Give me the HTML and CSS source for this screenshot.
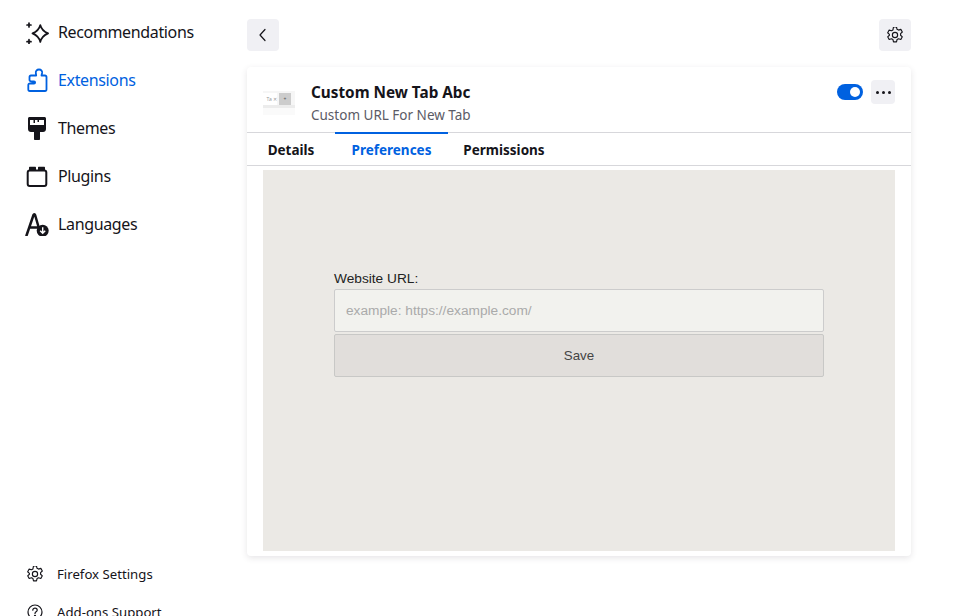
FILE: index.html
```html
<!DOCTYPE html>
<html lang="en">
<head>
  <meta charset="UTF-8">
  <title>Add-ons Manager</title>
  <link rel="stylesheet" href="styles.css">
</head>
<body>

<nav class="sidebar">
  <ul class="cats">
    <li class="cat">
      <svg class="cat-icon" viewBox="0 0 24 24" fill="none" stroke="currentColor" stroke-width="1.700" stroke-linejoin="round" stroke-linecap="round">
        <path d="M15.300 5c.9 3.700 2.400 6.200 7.800 8.400-5.400 2.200-6.900 4.700-7.800 8.600-.9-3.900-2.400-6.400-7.800-8.600 5.400-2.200 6.900-4.700 7.800-8.400z"/>
        <path d="M4 3v4M2 5h4M4 19.700v4M2 21.700h4"/>
      </svg>
      <span>Recommendations</span>
    </li>
    <li class="cat active">
      <svg class="cat-icon" viewBox="0 0 24 24" fill="none" stroke="currentColor" stroke-width="1.800" stroke-linejoin="round">
        <path d="M14 1.500c-2.200 0-3.500 1.600-3.200 3.500l.4 2.500H6c-1 0-1.500.7-1.500 1.500v3c0 1.200 1.500 1.500 3 1.500H9c1.500 0 1.500 2 0 2H5c-1 0-1.700.7-1.700 1.700v4c0 .9.700 1.800 1.500 1.800H20c.9 0 1.500-.7 1.500-1.800V9c0-.9-.6-1.500-1.500-1.500h-3.500l.6-2.500c.4-1.900-.9-3.500-3.100-3.500z"/>
      </svg>
      <span>Extensions</span>
    </li>
    <li class="cat">
      <svg class="cat-icon" viewBox="0 0 24 24" fill="currentColor">
        <path d="M4.500 1h15c.8 0 1.500.7 1.500 1.500V13c0 1.700-1.300 3-3 3h-3v7c0 1-1 1.700-3 1.700s-3-.7-3-1.700v-7H6c-1.700 0-3-1.300-3-3V2.500C3 1.700 3.700 1 4.500 1z"/>
        <path fill="#fff" d="M5 4h3.500v3H10V4h2.500v2H14V4h5v5H5z"/>
      </svg>
      <span>Themes</span>
    </li>
    <li class="cat">
      <svg class="cat-icon" viewBox="0 0 24 24" fill="none" stroke="currentColor" stroke-width="2" stroke-linejoin="round">
        <rect x="2.700" y="6.500" width="18.600" height="15.500" rx="2"/>
        <path fill="currentColor" stroke="none" d="M5 2.700h5c.6 0 1 .4 1 1V7H4V3.700c0-.6.4-1 1-1zM14 2.700h5c.6 0 1 .4 1 1V7h-7V3.700c0-.6.4-1 1-1z"/>
      </svg>
      <span>Plugins</span>
    </li>
    <li class="cat">
      <svg class="cat-icon" viewBox="0 0 24 24" fill="none">
        <path d="M1.500 23.500L8.500 3c.3-1 1.300-1 1.600 0l3.900 13.500M4.500 15.500h8" stroke="currentColor" stroke-width="2.500" stroke-linecap="round" stroke-linejoin="round"/>
        <circle cx="17.700" cy="18.700" r="6" fill="currentColor"/>
        <path d="M17.700 15.200v6M15.200 18.700l2.500 2.500 2.500-2.500" stroke="#fff" stroke-width="1.400" fill="none"/>
      </svg>
      <span>Languages</span>
    </li>
  </ul>
  <ul class="footer-links">
    <li class="foot-link">
      <svg class="foot-icon" viewBox="0 0 16 16"><use href="#gear"/></svg>
      <span>Firefox Settings</span>
    </li>
    <li class="foot-link">
      <svg class="foot-icon" viewBox="0 0 16 16" fill="none" stroke="currentColor" stroke-width="1.200" stroke-linecap="round">
        <circle cx="8" cy="8" r="7"/>
        <path d="M5.800 6.200C5.800 5 6.800 4.200 8 4.200s2.200.8 2.200 2c0 1.700-2.200 1.600-2.200 3.300"/>
        <circle cx="8" cy="11.800" r=".5" fill="currentColor"/>
      </svg>
      <span>Add-ons Support</span>
    </li>
  </ul>
</nav>

<main class="content">
  <div class="topbar">
    <button class="square-btn">
      <svg width="16" height="16" viewBox="0 0 16 16" fill="none" stroke="#15141a" stroke-width="1.200" stroke-linecap="round" stroke-linejoin="round"><path d="M10 2.500 5 8l5 5.500"/></svg>
    </button>
    <button class="square-btn">
      <svg width="16" height="16" viewBox="0 0 16 16"><use href="#gear"/></svg>
    </button>
  </div>

  <section class="card">
    <header class="addon-head">
      <div class="thumb">
        <div class="thumb-tab">Ta ✕</div>
        <div class="thumb-plus">+</div>
      </div>
      <div class="addon-text">
        <h1 class="addon-name">Custom New Tab Abc</h1>
        <p class="addon-desc">Custom URL For New Tab</p>
      </div>
      <div class="addon-controls">
        <span class="toggle"></span>
        <button class="more-btn"><i></i><i></i><i></i></button>
      </div>
    </header>

    <div class="tabs">
      <div class="tab tab-details">Details</div>
      <div class="tab tab-prefs selected">Preferences</div>
      <div class="tab tab-perms">Permissions</div>
    </div>

    <div class="prefs-panel">
      <form class="url-form">
        <label for="url">Website URL:</label>
        <input type="text" id="url" placeholder="example: https://example.com/">
        <button type="button">Save</button>
      </form>
    </div>
  </section>
</main>

<svg class="defs" width="0" height="0">
  <symbol id="gear" viewBox="1 1 14 14">
    <g fill="none" stroke="#15141a" stroke-width="1" stroke-linejoin="round">
      <path d="M6.700 1h2.600l.5 2 1.300.7 2-.6 1.300 2.300-1.500 1.400v1.400l1.500 1.400-1.300 2.300-2-.6-1.300.7-.5 2H6.700l-.5-2-1.300-.7-2 .6-1.300-2.300 1.500-1.400V7.400L1.600 6l1.300-2.300 2 .6 1.300-.7z"/>
      <circle cx="8" cy="8" r="2.300"/>
    </g>
  </symbol>
</svg>

</body>
</html>
```

FILE: styles.css
```css
html, body {
  height: 616px;
  overflow: hidden;
}
body {
  margin: 0;
  display: flex;
  background: #fff;
  color: #15141a;
  font-family: "Noto Sans", Arial, sans-serif;
}
ul {
  list-style: none;
  margin: 0;
  padding: 0;
}
button {
  border: 0;
  padding: 0;
  font: inherit;
}
.defs {
  position: absolute;
}

/* sidebar */
.sidebar {
  width: 247px;
  flex: none;
  height: 630px;
  box-sizing: border-box;
  padding: 8px 0 0 25px;
  display: flex;
  flex-direction: column;
  justify-content: space-between;
}
.cat {
  height: 48px;
  display: flex;
  align-items: center;
  gap: 9px;
  font-size: 16px;
  letter-spacing: -0.36px;
}
.cat-icon {
  width: 24px;
  height: 24px;
  flex: none;
}
.cat.active {
  color: #0061e0;
}
.footer-links {
  margin-top: -1px;
}
.foot-link {
  height: 37px;
  display: flex;
  align-items: center;
  gap: 14px;
  padding-left: 2px;
  font-size: 13.2px;
}
.foot-link:first-child {
  margin-bottom: 1px;
  margin-top: -1px;
}
.foot-icon {
  width: 16px;
  height: 16px;
  flex: none;
}

/* main column */
.content {
  width: 664px;
  flex: none;
}
.topbar {
  display: flex;
  justify-content: space-between;
  padding: 19px 0 16px;
}
.square-btn {
  width: 32px;
  height: 32px;
  border-radius: 4px;
  background: #f0f0f4;
  display: flex;
  align-items: center;
  justify-content: center;
}
.card {
  height: 489px;
  background: #fff;
  border-radius: 4px;
  box-shadow: 0 2px 6px rgba(58, 57, 68, 0.13);
  display: flex;
  flex-direction: column;
}
.addon-head {
  height: 66px;
  flex: none;
  box-sizing: border-box;
  display: flex;
  padding: 13px 16px 0;
  border-bottom: 1px solid #d7d7db;
}
.thumb {
  width: 32px;
  height: 24px;
  margin-top: 11px;
  flex: none;
  background: linear-gradient(#f6f6f6 60%, #ececec 60%, #ececec 70%, #fafafa 70%);
  display: flex;
  align-items: flex-start;
  gap: 2px;
  padding-top: 2px;
  box-sizing: border-box;
  overflow: hidden;
  font-size: 5px;
  line-height: 12px;
  color: #999;
}
.thumb-tab {
  width: 14px;
  height: 12px;
  background: #fff;
  white-space: nowrap;
  text-align: right;
}
.thumb-plus {
  width: 12px;
  height: 12px;
  background: #ccc;
  color: #555;
  text-align: center;
}
.addon-text {
  margin-left: 16px;
  flex: 1;
}
.addon-name {
  margin: 0;
  font-size: 15.3px;
  line-height: 24px;
  font-weight: 700;
}
.addon-desc {
  margin: 0;
  font-size: 13.5px;
  line-height: 22px;
  color: #5b5b66;
}
.addon-controls {
  display: flex;
  align-items: flex-start;
  gap: 8px;
}
.toggle {
  width: 26px;
  height: 16px;
  margin-top: 4px;
  border-radius: 8px;
  background: #0061e0;
  position: relative;
}
.toggle::after {
  content: "";
  position: absolute;
  top: 3px;
  right: 3px;
  width: 10px;
  height: 10px;
  border-radius: 50%;
  background: #fff;
}
.more-btn {
  width: 24px;
  height: 24px;
  border-radius: 4px;
  background: #f0f0f4;
  display: flex;
  align-items: center;
  justify-content: center;
  gap: 3px;
}
.more-btn i {
  width: 3px;
  height: 3px;
  border-radius: 50%;
  background: #15141a;
}

/* tabs */
.tabs {
  height: 33px;
  flex: none;
  box-sizing: border-box;
  display: flex;
  border-bottom: 1px solid #d7d7db;
  font-size: 13.5px;
  font-weight: 700;
}
.tab {
  line-height: 34px;
  text-align: center;
  box-sizing: border-box;
}
.tab-details {
  width: 88px;
}
.tab-prefs {
  width: 113px;
}
.tab-perms {
  width: 112px;
}
.tab.selected {
  color: #0061e0;
  border-top: 2px solid #0061e0;
  margin-top: -1px;
  height: 33px;
  line-height: 33px;
}

/* preferences frame */
.prefs-panel {
  height: 381px;
  margin: 4px 16px 0;
  padding-top: 101px;
  box-sizing: border-box;
  background: #ebe9e5;
  display: flex;
  justify-content: center;
}
.url-form {
  width: 490px;
  display: flex;
  flex-direction: column;
  font-family: "Liberation Sans", Arial, sans-serif;
  font-size: 13.7px;
}
.url-form label {
  line-height: 15px;
  margin-bottom: 3px;
  color: #222;
}
.url-form input {
  height: 43px;
  box-sizing: border-box;
  padding: 0 11px;
  border: 1px solid #ccc;
  border-radius: 2px;
  background: #f2f2ee;
  font: inherit;
}
.url-form input::placeholder {
  color: #aaa;
  opacity: 1;
}
.url-form button {
  height: 43px;
  margin-top: 2px;
  border: 1px solid #c8c8c6;
  border-radius: 2px;
  background: #e1dedb;
  color: #444;
  font-size: 13.33px;
}
```
